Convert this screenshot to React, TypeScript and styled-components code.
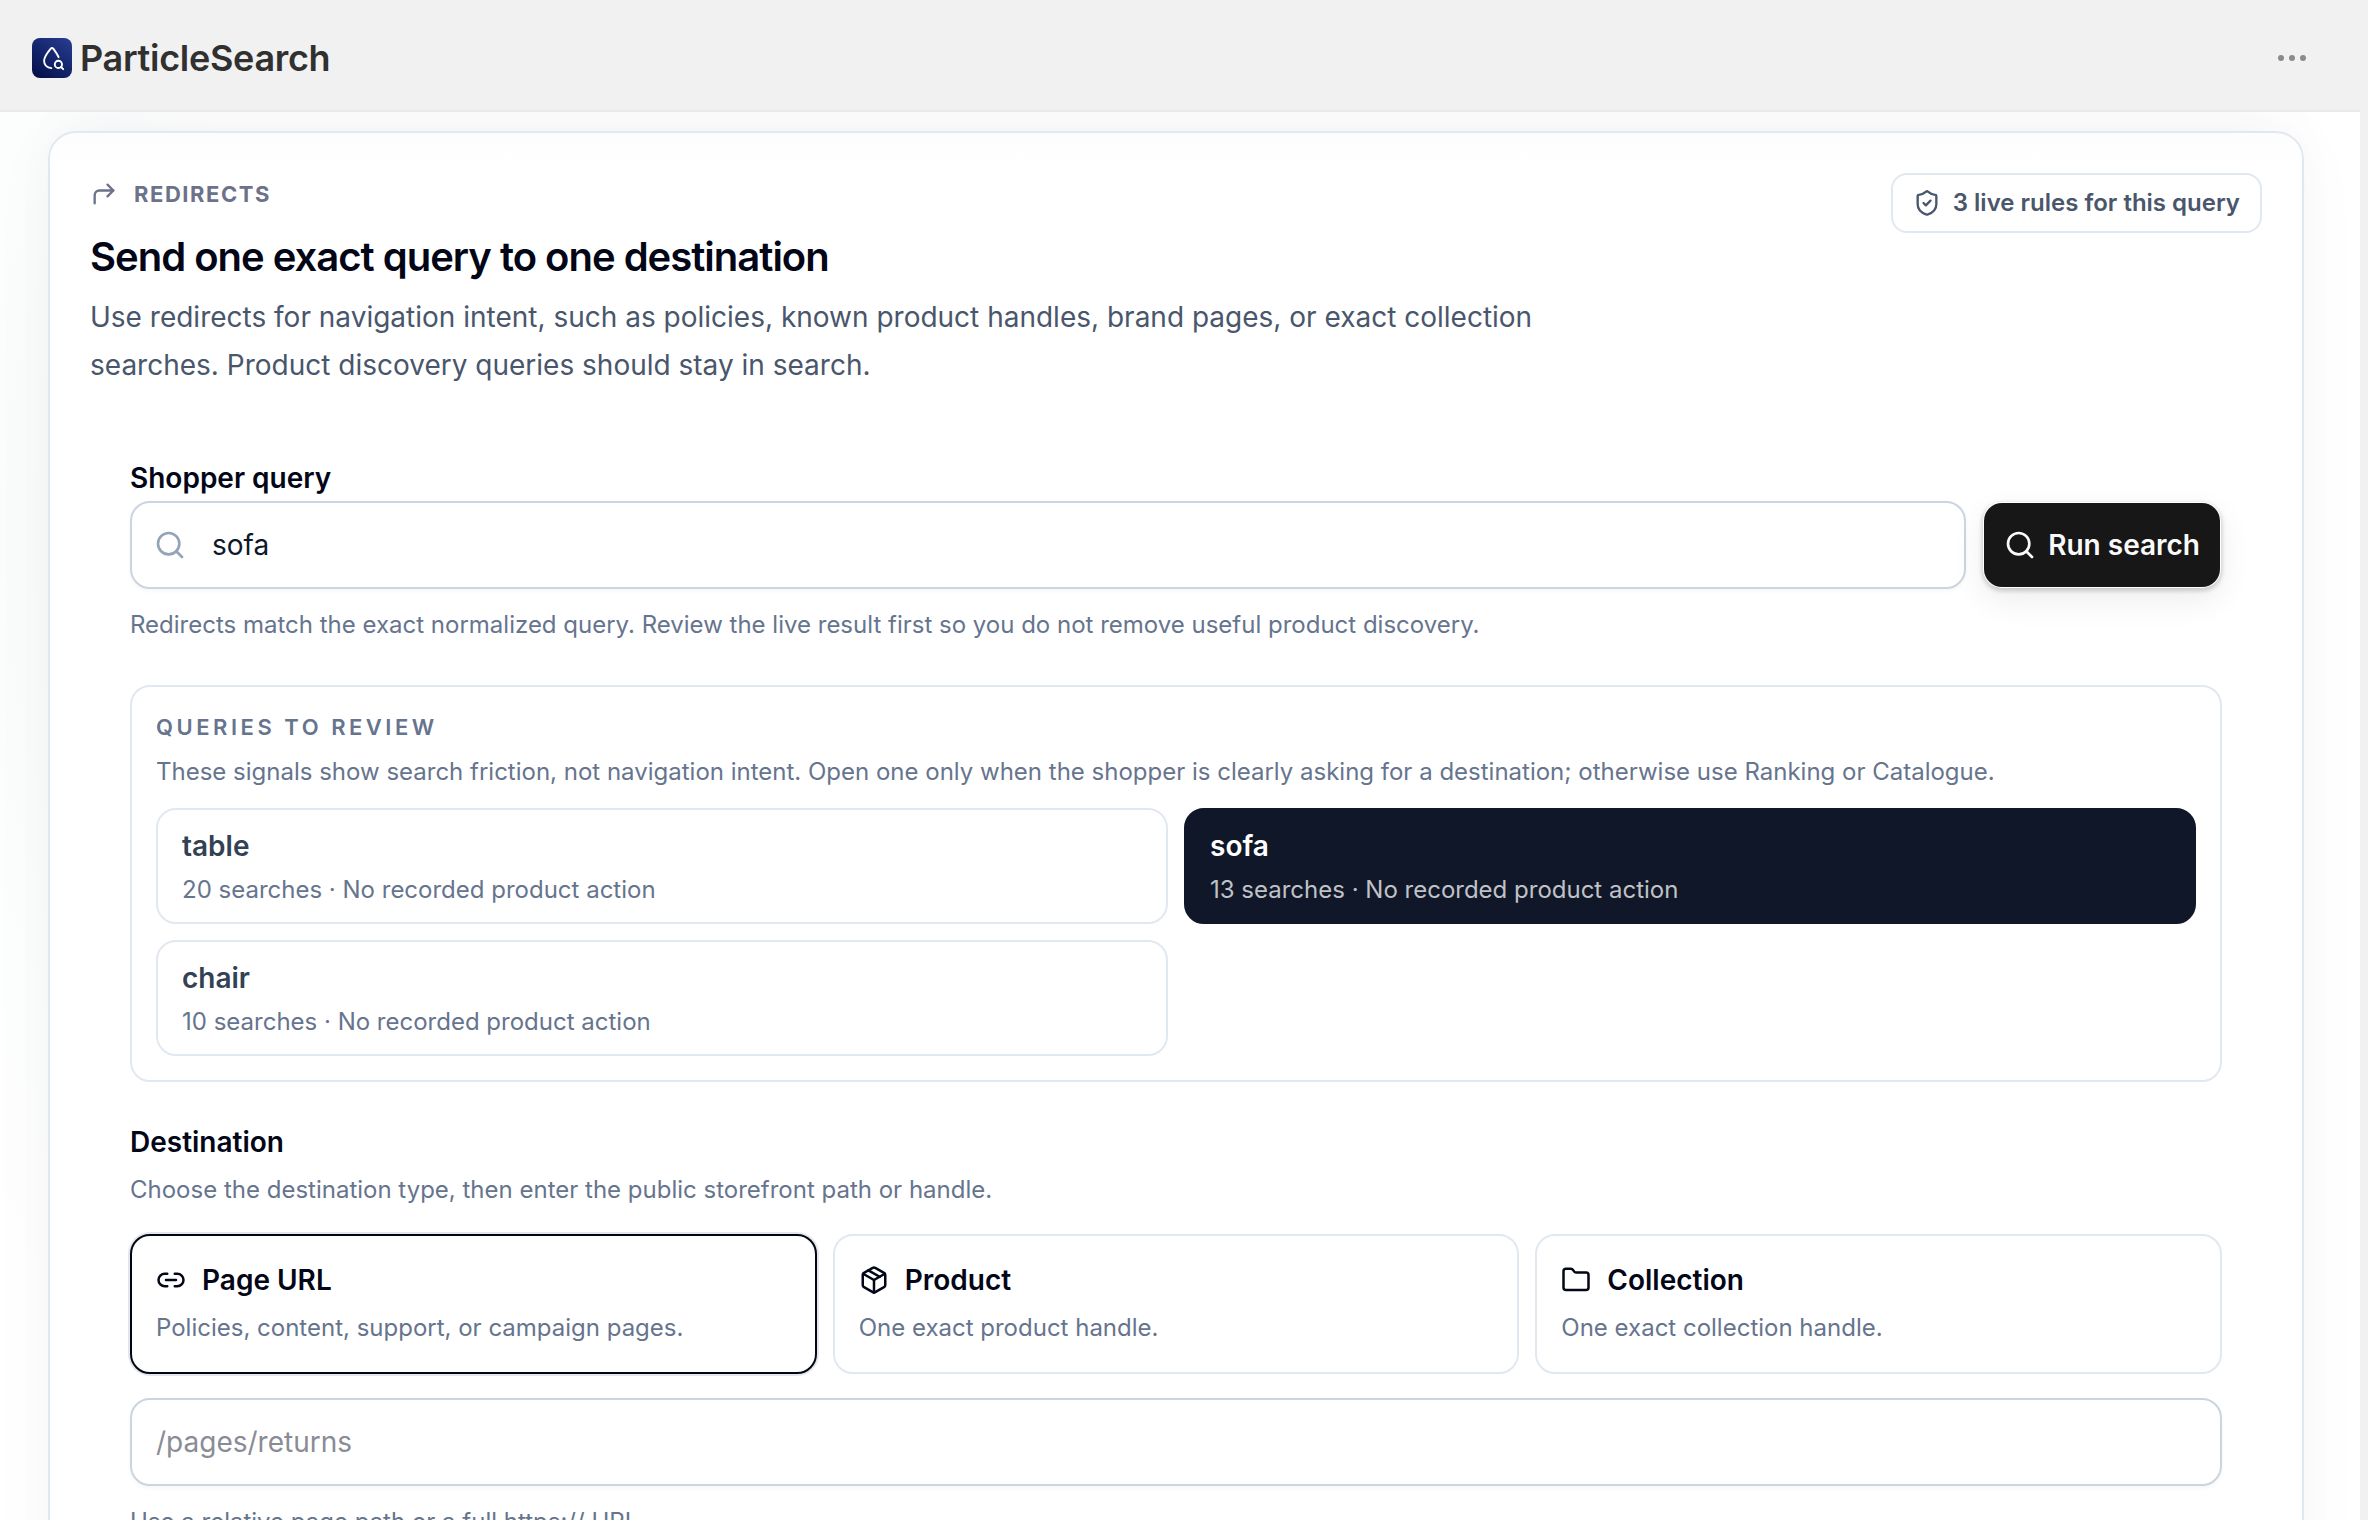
import React from "react";
import styled, { createGlobalStyle } from "styled-components";
import { CornerUpRight, Folder, Link2, Package, Search, ShieldCheck } from "lucide-react";

const Global = createGlobalStyle`
  *, *::before, *::after { box-sizing: border-box; }
  html, body { margin: 0; padding: 0; height: 100%; overflow: hidden; }
  body { font-family: Inter, "Liberation Sans", sans-serif; background: #f1f1f1; -webkit-font-smoothing: antialiased; }
  p, h1, h2, h3 { margin: 0; }
  button, input { font-family: inherit; }
  svg { display: block; flex: none; }
`;

const Shell = styled.div`
  height: 1520px;
  display: flex;
  flex-direction: column;
  overflow: hidden;
`;

const TopBar = styled.header`
  height: 110px;
  flex: none;
  display: flex;
  align-items: center;
  justify-content: space-between;
  padding: 6px 62px 0 32px;
  background: #f1f1f1;
`;

const Brand = styled.div`
  display: flex;
  align-items: center;
  gap: 8px;
  color: #303030;
  font-size: 36px;
  font-weight: 600;
  line-height: 40px;
  letter-spacing: -0.3px;
`;

const MoreButton = styled.button`
  display: flex;
  gap: 5px;
  padding: 0;
  border: 0;
  background: none;
`;

const Dot = styled.span`
  width: 6px;
  height: 6px;
  border-radius: 50%;
  background: #8a8a8a;
`;

const Page = styled.main`
  width: 2360px;
  flex: 1;
  min-height: 0;
  padding: 19px 56px 0 48px;
  border-top: 2px solid #e9e9ea;
  overflow: hidden;
  background:
    radial-gradient(ellipse 180px 800px at 60px 420px, rgba(232, 242, 238, 0.28), rgba(255, 255, 255, 0)),
    #ffffff;
`;

const Card = styled.section`
  height: 1600px;
  border: 2px solid #e2e8f0;
  border-radius: 28px;
  padding: 40px;
  background: linear-gradient(180deg, #fdfdfe 0, #ffffff 36px);
  box-shadow:
    0 0 80px rgba(15, 23, 42, 0.028),
    0 -16px 60px -16px rgba(30, 41, 90, 0.045);
`;

const CardHead = styled.div`
  display: flex;
  align-items: flex-start;
  justify-content: space-between;
`;

const Eyebrow = styled.div`
  display: flex;
  align-items: center;
  gap: 16px;
  height: 42px;
  color: #6b7289;
  font-size: 22px;
  font-weight: 700;
  letter-spacing: 1.54px;
`;

const Title = styled.h1`
  margin-top: 14px;
  color: #020617;
  font-size: 40px;
  line-height: 56px;
  font-weight: 600;
  letter-spacing: -1px;
`;

const Lead = styled.p`
  width: 1500px;
  margin-top: 8px;
  color: #49566c;
  font-size: 28px;
  line-height: 48px;
`;

const RulesBadge = styled.div`
  display: flex;
  align-items: center;
  gap: 12px;
  height: 60px;
  padding: 0 20px;
  border: 2px solid #e2e8f0;
  border-radius: 16px;
  color: #49566c;
  font-size: 24px;
  font-weight: 600;
  white-space: nowrap;
`;

const BadgeText = styled.span`
  padding-bottom: 2px;
`;

const Form = styled.div`
  padding: 0 40px;
  margin-top: 69px;
`;

const Label = styled.h2<{ $spaced?: boolean }>`
  margin-top: ${(p) => (p.$spaced ? 40 : 0)}px;
  color: #020617;
  font-size: 28px;
  line-height: 40px;
  font-weight: 600;
`;

const Hint = styled.p<{ $top: number }>`
  margin-top: ${(p) => p.$top}px;
  color: #66748e;
  font-size: 24px;
  line-height: 40px;
`;

const QueryRow = styled.div`
  display: flex;
  gap: 16px;
  margin-top: 3px;
`;

const Field = styled.label<{ $inset: number }>`
  display: flex;
  align-items: center;
  flex: 1;
  height: 88px;
  padding: 0 ${(p) => p.$inset}px;
  gap: 26px;
  border: 2px solid #cbd5e1;
  border-radius: 20px;
  background: #ffffff;
  color: #94a3b8;
  box-shadow: 0 2px 4px rgba(0, 0, 0, 0.04);
`;

const Input = styled.input`
  flex: 1;
  min-width: 0;
  padding: 0;
  border: 0;
  outline: 0;
  background: transparent;
  color: #0f172a;
  font-size: 28px;
  line-height: 40px;
  &::placeholder { color: #898c95; opacity: 1; }
`;

const RunButton = styled.button`
  display: flex;
  align-items: center;
  gap: 12px;
  height: 88px;
  padding: 0 20px;
  border: 2px solid transparent;
  border-radius: 20px;
  background: #171717;
  background-clip: padding-box;
  color: #fafafa;
  font-size: 28px;
  font-weight: 600;
  white-space: nowrap;
  box-shadow: 0 2px 4px rgba(15, 10, 30, 0.18), 0 12px 32px rgba(0, 0, 0, 0.07);
`;

const Panel = styled.div`
  margin-top: 40px;
  padding: 24px;
  border: 2px solid #e2e8f0;
  border-radius: 20px;
`;

const PanelTitle = styled.h3`
  color: #66748e;
  font-size: 22px;
  line-height: 32px;
  font-weight: 600;
  letter-spacing: 3.52px;
`;

const QueryGrid = styled.div`
  display: grid;
  grid-template-columns: 1fr 1fr;
  gap: 16px;
  margin-top: 16px;
`;

const QueryCard = styled.button<{ $active?: boolean }>`
  display: flex;
  flex-direction: column;
  gap: 8px;
  height: 116px;
  padding: 16px 24px;
  text-align: left;
  border: 2px solid ${(p) => (p.$active ? "#101729" : "#e2e8f0")};
  border-radius: 20px;
  background: ${(p) => (p.$active ? "#101729" : "#ffffff")};
  color: ${(p) => (p.$active ? "#ffffff" : "#334155")};
`;

const QueryName = styled.div`
  font-size: 28px;
  line-height: 40px;
  font-weight: 600;
`;

const QueryMeta = styled.div<{ $active?: boolean }>`
  font-size: 24px;
  line-height: 32px;
  color: ${(p) => (p.$active ? "#c0c2c7" : "#66748e")};
`;

const TypeGrid = styled.div`
  display: grid;
  grid-template-columns: repeat(3, 1fr);
  gap: 16px;
  margin: 24px 0;
`;

const TypeCard = styled.button<{ $active?: boolean }>`
  display: flex;
  flex-direction: column;
  gap: 8px;
  height: 140px;
  padding: 24px;
  text-align: left;
  border: 2px solid ${(p) => (p.$active ? "#020617" : "#e2e8f0")};
  border-radius: 20px;
  background: #ffffff;
  color: #020617;
  box-shadow: ${(p) => (p.$active ? "0 0 0 2px rgba(2, 6, 23, 0.1)" : "none")};
`;

const TypeName = styled.div`
  display: flex;
  align-items: center;
  gap: 16px;
  font-size: 28px;
  line-height: 40px;
  font-weight: 600;
`;

const TypeMeta = styled.div`
  color: #66748e;
  font-size: 24px;
  line-height: 40px;
`;

const Logo = () => (
  <svg width="40" height="40" viewBox="0 0 40 40" fill="none">
    <defs>
      <linearGradient id="logo" x1="6" y1="40" x2="34" y2="0" gradientUnits="userSpaceOnUse">
        <stop stopColor="#04104a" />
        <stop offset="1" stopColor="#263b8e" />
      </linearGradient>
    </defs>
    <rect width="40" height="40" rx="8" fill="url(#logo)" />
    <path
      d="M26.600 19.200C25.200 15.700 23 13 21.200 10.600c-.7-.9-1.700-.9-2.400 0C15.500 14.600 12.100 18.500 12.100 22.800c0 4.100 2.900 7.100 7.200 7.300"
      stroke="#fff"
      strokeWidth="1.900"
      strokeLinecap="round"
    />
    <circle cx="26.400" cy="26.400" r="3.600" stroke="#fff" strokeWidth="1.900" />
    <path d="M29 29l2.200 2.200" stroke="#fff" strokeWidth="1.900" strokeLinecap="round" />
  </svg>
);

const queries = [
  { name: "table", count: 20 },
  { name: "sofa", count: 13, active: true },
  { name: "chair", count: 10 },
];

const types = [
  { name: "Page URL", meta: "Policies, content, support, or campaign pages.", Icon: Link2, active: true },
  { name: "Product", meta: "One exact product handle.", Icon: Package },
  { name: "Collection", meta: "One exact collection handle.", Icon: Folder },
];

export default function App() {
  return (
    <Shell>
      <Global />
      <TopBar>
        <Brand>
          <Logo />
          <span>ParticleSearch</span>
        </Brand>
        <MoreButton aria-label="More">
          <Dot />
          <Dot />
          <Dot />
        </MoreButton>
      </TopBar>
      <Page>
        <Card>
          <CardHead>
            <div>
              <Eyebrow>
                <CornerUpRight size={28} />
                <span>REDIRECTS</span>
              </Eyebrow>
              <Title>Send one exact query to one destination</Title>
              <Lead>
                Use redirects for navigation intent, such as policies, known product handles, brand pages, or exact
                collection searches. Product discovery queries should stay in search.
              </Lead>
            </div>
            <RulesBadge>
              <ShieldCheck size={28} />
              <BadgeText>3 live rules for this query</BadgeText>
            </RulesBadge>
          </CardHead>
          <Form>
            <Label>Shopper query</Label>
            <QueryRow>
              <Field $inset={22}>
                <Search size={32} />
                <Input defaultValue="sofa" />
              </Field>
              <RunButton>
                <Search size={32} />
                <span>Run search</span>
              </RunButton>
            </QueryRow>
            <Hint $top={16}>
              Redirects match the exact normalized query. Review the live result first so you do not remove useful
              product discovery.
            </Hint>
            <Panel>
              <PanelTitle>QUERIES TO REVIEW</PanelTitle>
              <Hint $top={9}>
                These signals show search friction, not navigation intent. Open one only when the shopper is clearly
                asking for a destination; otherwise use Ranking or Catalogue.
              </Hint>
              <QueryGrid>
                {queries.map((q) => (
                  <QueryCard key={q.name} $active={q.active}>
                    <QueryName>{q.name}</QueryName>
                    <QueryMeta $active={q.active}>{q.count} searches · No recorded product action</QueryMeta>
                  </QueryCard>
                ))}
              </QueryGrid>
            </Panel>
            <Label $spaced>Destination</Label>
            <Hint $top={8}>Choose the destination type, then enter the public storefront path or handle.</Hint>
            <TypeGrid>
              {types.map(({ name, meta, Icon, active }) => (
                <TypeCard key={name} $active={active}>
                  <TypeName>
                    <Icon size={30} />
                    <span>{name}</span>
                  </TypeName>
                  <TypeMeta>{meta}</TypeMeta>
                </TypeCard>
              ))}
            </TypeGrid>
            <Field $inset={24}>
              <Input placeholder="/pages/returns" />
            </Field>
            <Hint $top={16}>Use a relative page path or a full https:// URL.</Hint>
          </Form>
        </Card>
      </Page>
    </Shell>
  );
}
